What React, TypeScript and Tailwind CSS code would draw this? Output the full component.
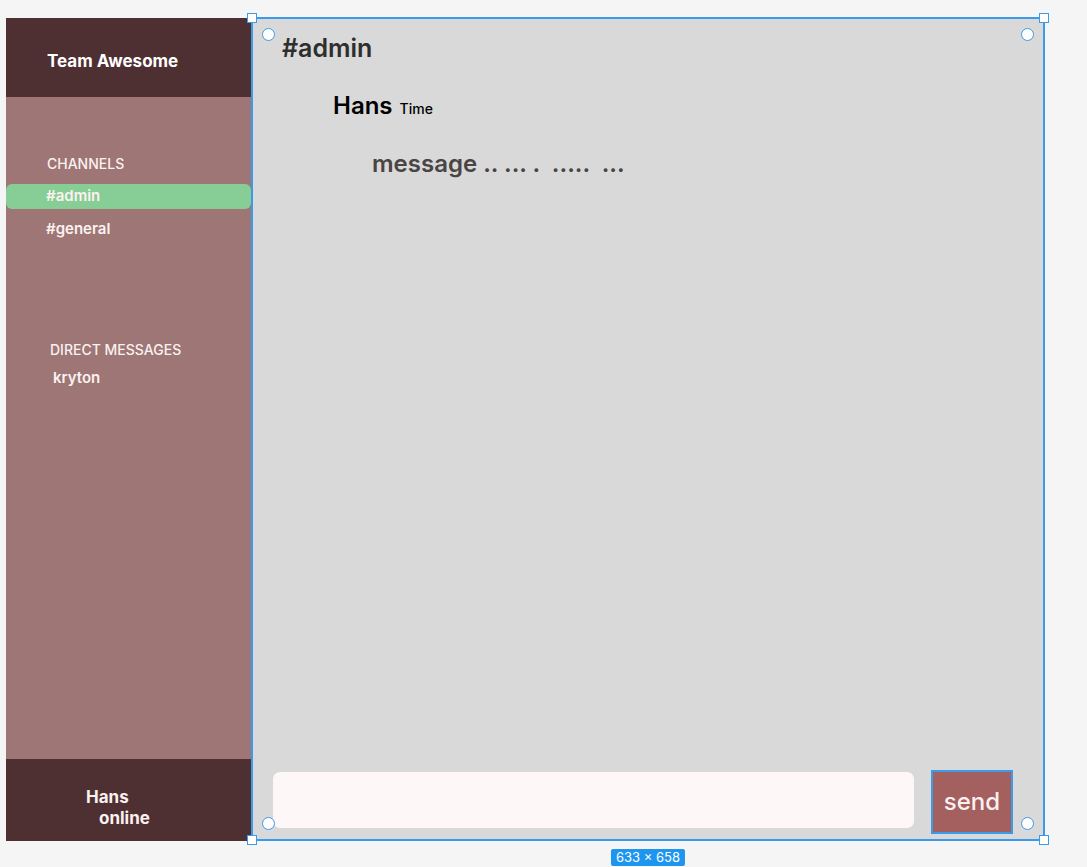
import React from 'react';

const Handle: React.FC<{ className: string }> = ({ className }) => (
  <div className={`absolute w-[10px] h-[10px] bg-white border border-[#3a9bea] ${className}`} />
);

const Dot: React.FC<{ className: string }> = ({ className }) => (
  <div className={`absolute w-[13px] h-[13px] rounded-full bg-white border-[1.5px] border-[#3a9bea] ${className}`} />
);

const Sidebar: React.FC = () => (
  <div className="w-[245px] h-[823px] flex flex-col bg-[#9d7675] text-[#fbf1f1]">
    <div className="h-[79px] bg-[#4f3032] flex items-center pl-[41px] pt-[8px]">
      <span className="text-[17px] font-bold text-white">Team Awesome</span>
    </div>
    <div className="flex-1 flex flex-col">
      <div className="mt-[58px] pl-[41px] text-[14px] font-medium leading-[17px]">CHANNELS</div>
      <div className="mt-[12px] h-[25px] bg-[#86ce95] rounded-[6px] flex items-center pl-[40px] text-[15px] font-semibold">
        #admin
      </div>
      <div className="mt-[10px] pl-[40px] text-[15px] font-semibold leading-[20px]">#general</div>
      <div className="mt-[102px] pl-[44px] text-[14px] font-medium leading-[17px]">DIRECT MESSAGES</div>
      <div className="mt-[10px] pl-[47px] text-[15px] font-semibold leading-[20px]">kryton</div>
    </div>
    <div className="h-[82px] bg-[#4f3032] flex flex-col justify-center pt-[16px] text-[17px] font-bold leading-[21px] text-[#fbf1f1]">
      <span className="pl-[80px]">Hans</span>
      <span className="pl-[93px]">online</span>
    </div>
  </div>
);

const ChatPanel: React.FC = () => (
  <div className="relative w-[794px] h-[824px] -mt-px bg-[#d9d9d9] border-2 border-[#3a9bea] flex flex-col">
    <div className="pl-[29px] pt-[15px] text-[25px] font-semibold leading-[29px] text-[#2e2e2e]">#admin</div>
    <div className="pl-[80px] mt-[28px] flex items-baseline gap-[7px] text-black">
      <span className="text-[24px] font-semibold leading-[29px]">Hans</span>
      <span className="text-[14px] font-medium">Time</span>
    </div>
    <div className="pl-[119px] mt-[29px] text-[24px] font-semibold leading-[29px] text-[#4a4444] whitespace-pre">
      {'message .. ... .  .....  ...'}
    </div>
    <div className="flex-1" />
    <div className="flex items-center pl-[20px] pb-[5px]">
      <div className="w-[641px] h-[56px] mb-[4px] bg-[#fdf7f7] rounded-[7px]" />
      <button className="ml-[17px] w-[82px] h-[64px] bg-[#a45f5f] border-2 border-[#3a9bea] text-[24px] font-medium text-[#fbefef]">
        send
      </button>
    </div>
    <Handle className="-top-[6px] -left-[6px]" />
    <Handle className="-top-[6px] -right-[6px]" />
    <Handle className="-bottom-[6px] -left-[6px]" />
    <Handle className="-bottom-[6px] -right-[6px]" />
    <Dot className="top-[9px] left-[9px]" />
    <Dot className="top-[9px] right-[9px]" />
    <Dot className="bottom-[9px] left-[9px]" />
    <Dot className="bottom-[9px] right-[9px]" />
    <div className="absolute left-1/2 -translate-x-1/2 -bottom-[27px] bg-[#1e96f0] text-white text-[13px] leading-[17px] px-[5px] rounded-[2px]">
      633 × 658
    </div>
  </div>
);

export default function App() {
  return (
    <div className="w-[1087px] h-[867px] bg-[#f5f5f5] overflow-hidden" style={{ fontFamily: 'Inter, "Noto Sans", sans-serif' }}>
      <div className="flex pt-[18px] pl-[6px]">
        <Sidebar />
        <ChatPanel />
      </div>
    </div>
  );
}
